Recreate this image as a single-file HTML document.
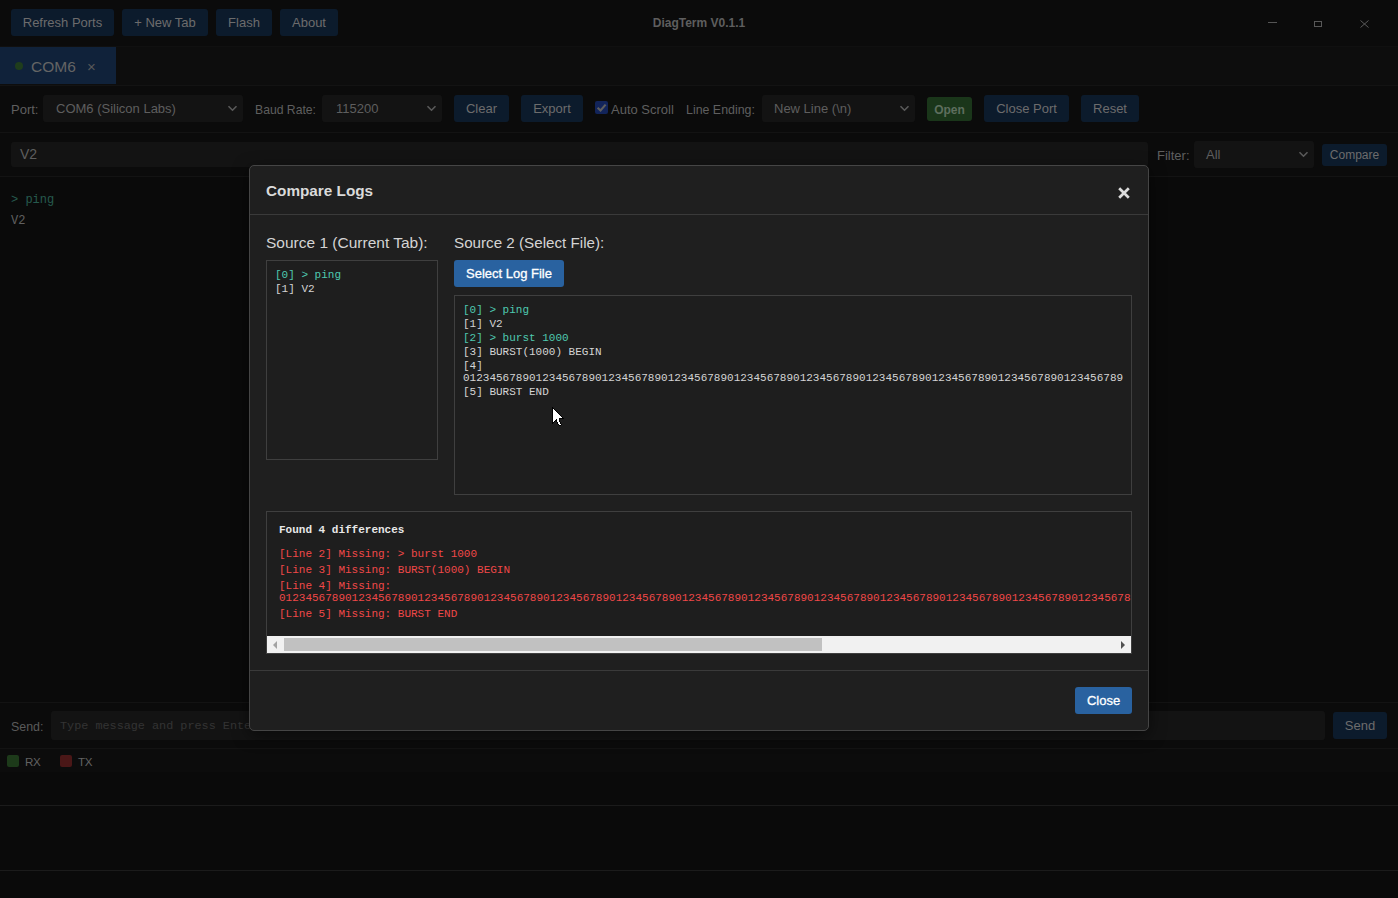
<!DOCTYPE html>
<html><head><meta charset="utf-8">
<style>
*{box-sizing:border-box;margin:0;padding:0}
html,body{width:1398px;height:898px;overflow:hidden;background:#0b0b0b;font-family:"Liberation Sans",sans-serif;}
.a{position:absolute}
.hl{position:absolute;left:0;width:1398px;height:1px;background:#131313}
.btn{position:absolute;background:#0c1b2c;color:#6c6c6c;border-radius:3px;font-size:13px;height:27px;line-height:27px;text-align:center;white-space:nowrap}
.lbl{position:absolute;color:#5f5f5f;font-size:13px;white-space:nowrap;line-height:16px}
.sel{position:absolute;background:#131313;border-radius:3px;height:27px;color:#5e5e5e;font-size:13px;line-height:27px;white-space:nowrap}
.chev{position:absolute;top:10px;width:10px;height:6px}
.mono{font-family:"Liberation Mono",monospace}
.logbox{border:1px solid #3f3f3f;background:#1e1e1e;padding:8px;font-size:11px;color:#d4d4d4;overflow:hidden}
.logbox div{white-space:pre-wrap;line-height:12px;margin-bottom:2px}
.g{color:#4ec9b0}
.diffbox{border:1px solid #3f3f3f;background:#1e1e1e;padding:12px;font-size:11px;overflow:hidden}
.diffbox div{white-space:pre-wrap}
.found{color:#e8e8e8;font-weight:bold;line-height:12px;margin-bottom:12px}
.r{color:#f04848;line-height:12px;margin-bottom:4px}
.sb{position:absolute;left:0;bottom:0;width:864px;height:17px;background:#f1f1f1}
.thumb{position:absolute;left:17px;top:2px;width:538px;height:13px;background:#c1c1c1}
.sbl{position:absolute;left:6px;top:4.5px;width:0;height:0;border-top:4px solid transparent;border-bottom:4px solid transparent;border-right:4px solid #a3a3a3}
.sbr{position:absolute;right:6px;top:4.5px;width:0;height:0;border-top:4px solid transparent;border-bottom:4px solid transparent;border-left:4px solid #505050}
</style></head><body>
<!-- title bar -->
<div class="a" style="left:0;top:0;width:1398px;height:46px;background:#0b0b0b"></div>
<div class="btn" style="left:11px;top:9px;width:103px">Refresh Ports</div>
<div class="btn" style="left:122px;top:9px;width:86px">+ New Tab</div>
<div class="btn" style="left:216px;top:9px;width:56px">Flash</div>
<div class="btn" style="left:280px;top:9px;width:58px">About</div>
<div class="a" style="left:0;top:15px;width:1398px;text-align:center;font-weight:bold;font-size:12px;color:#5e5e5e;line-height:16px">DiagTerm V0.1.1</div>
<div class="a" style="left:1268px;top:22px;width:9px;height:1px;background:#555"></div>
<div class="a" style="left:1314px;top:21px;width:8px;height:6px;border:1px solid #585858"></div>
<svg class="a" style="left:1360px;top:20px" width="9" height="8"><path d="M0.5 0.5L8.5 7.5M8.5 0.5L0.5 7.5" stroke="#5a5a5a" stroke-width="1"/></svg>
<div class="hl" style="top:46px;background:#101010"></div>

<!-- tab row -->
<div class="a" style="left:0;top:47px;width:1398px;height:38px;background:#0d0d0d"></div>
<div class="a" style="left:0;top:47px;width:116px;height:37px;background:#10223a"></div>
<div class="a" style="left:15px;top:62px;width:8px;height:8px;border-radius:50%;background:#1f3d1c"></div>
<div class="a" style="left:31px;top:58px;font-size:15.5px;color:#646464;line-height:17px">COM6</div>
<div class="a" style="left:87px;top:58px;font-size:15px;color:#585858;line-height:17px">×</div>
<div class="hl" style="top:85px"></div>

<!-- toolbar -->
<div class="a" style="left:0;top:86px;width:1398px;height:46px;background:#0b0b0b"></div>
<div class="lbl" style="left:11px;top:102px">Port:</div>
<div class="sel" style="left:43px;top:95px;width:200px;padding-left:13px">COM6 (Silicon Labs)</div>
<svg class="a" style="left:227px;top:105px" width="11" height="7"><path d="M1.5 1.2L5.5 5.2L9.5 1.2" stroke="#5a5a5a" stroke-width="1.6" fill="none"/></svg>
<div class="lbl" style="left:255px;top:102px;font-size:12.2px">Baud Rate:</div>
<div class="sel" style="left:322px;top:95px;width:120px;padding-left:14px">115200</div>
<svg class="a" style="left:426px;top:105px" width="11" height="7"><path d="M1.5 1.2L5.5 5.2L9.5 1.2" stroke="#5a5a5a" stroke-width="1.6" fill="none"/></svg>
<div class="btn" style="left:454px;top:95px;width:55px">Clear</div>
<div class="btn" style="left:521px;top:95px;width:62px">Export</div>
<div class="a" style="left:595px;top:101px;width:13px;height:13px;background:#12245a;border-radius:2px"></div><svg class="a" style="left:595px;top:101px" width="13" height="13"><path d="M2.6 6.8L5.5 9.5L10.6 3.6" stroke="#5e5e5e" stroke-width="2.1" fill="none"/></svg>
<div class="lbl" style="left:611px;top:102px">Auto Scroll</div>
<div class="lbl" style="left:686px;top:102px;font-size:12.4px">Line Ending:</div>
<div class="sel" style="left:762px;top:95px;width:153px;padding-left:12px">New Line (\n)</div>
<svg class="a" style="left:899px;top:105px" width="11" height="7"><path d="M1.5 1.2L5.5 5.2L9.5 1.2" stroke="#5a5a5a" stroke-width="1.6" fill="none"/></svg>
<div class="btn" style="left:927px;top:97px;width:45px;height:24px;line-height:26px;background:#1a361a;font-weight:bold;font-size:12px;color:#5e6e5e">Open</div>
<div class="btn" style="left:984px;top:95px;width:85px">Close Port</div>
<div class="btn" style="left:1081px;top:95px;width:58px">Reset</div>
<div class="hl" style="top:132px"></div>

<!-- filter row -->
<div class="sel" style="left:11px;top:142px;width:1137px;height:25px;line-height:25px;padding-left:9px;font-size:14px">V2</div>
<div class="lbl" style="left:1157px;top:148px">Filter:</div>
<div class="sel" style="left:1194px;top:141px;width:120px;padding-left:12px">All</div>
<svg class="a" style="left:1298px;top:151px" width="11" height="7"><path d="M1.5 1.2L5.5 5.2L9.5 1.2" stroke="#5a5a5a" stroke-width="1.6" fill="none"/></svg>
<div class="btn" style="left:1322px;top:144px;width:65px;height:22px;line-height:22px;font-size:12px">Compare</div>
<div class="hl" style="top:176px"></div>

<!-- terminal -->
<div class="a" style="left:0;top:177px;width:1398px;height:525px;background:#0a0a0a"></div>
<div class="a mono" style="left:11px;top:190px;font-size:12px;line-height:20px;color:#606060">
<div style="color:#265a4e">&gt; ping</div>
<div style="margin-top:1px">V2</div>
</div>

<!-- send row -->
<div class="hl" style="top:702px"></div>
<div class="lbl" style="left:11px;top:719px;font-size:12.4px;color:#5a5a5a">Send:</div>
<div class="sel" style="left:51px;top:711px;width:1274px;height:29px;line-height:31px;padding-left:9px;color:#333;font-family:'Liberation Mono',monospace;font-size:11.8px">Type message and press Enter...</div>
<div class="btn" style="left:1333px;top:712px;width:54px">Send</div>
<div class="hl" style="top:748px"></div>
<div class="a" style="left:0;top:749px;width:1398px;height:23px;background:#0c0c0c"></div>
<div class="a" style="left:0;top:772px;width:1398px;height:126px;background:#0a0a0a"></div>
<div class="a" style="left:7px;top:755px;width:12px;height:12px;border-radius:2px;background:#1d3a1a"></div>
<div class="a" style="left:25px;top:755px;font-size:11.6px;letter-spacing:-0.4px;color:#626262;line-height:14px">RX</div>
<div class="a" style="left:60px;top:755px;width:12px;height:12px;border-radius:2px;background:#4a1717"></div>
<div class="a" style="left:78px;top:755px;font-size:11.6px;letter-spacing:-0.4px;color:#626262;line-height:14px">TX</div>
<div class="hl" style="top:805px;background:#1b1b1b"></div>
<div class="hl" style="top:870px;background:#1b1b1b"></div>

<!-- MODAL -->
<div id="modal" class="a" style="left:249px;top:165px;width:900px;height:566px;background:#1f1f1f;border:1px solid #454545;border-radius:5px;box-shadow:0 4px 16px rgba(0,0,0,0.5)">
<div class="a" style="left:16px;top:16px;font-size:15.3px;font-weight:bold;color:#dadada;line-height:18px">Compare Logs</div>
<svg class="a" style="left:868px;top:21px" width="12" height="12"><path d="M1.2 1.2L10.8 10.8M10.8 1.2L1.2 10.8" stroke="#dcdcdc" stroke-width="2.7"/></svg>
<div class="a" style="left:0;top:48px;width:898px;height:1px;background:#3a3a3a"></div>
<div class="a" style="left:16px;top:68px;font-size:15.5px;color:#d4d4d4;line-height:18px">Source 1 (Current Tab):</div>
<div class="a" style="left:204px;top:68px;font-size:15.2px;color:#d4d4d4;line-height:18px">Source 2 (Select File):</div>
<div class="a mono logbox" style="left:16px;top:94px;width:172px;height:200px">
<div class="g">[0] &gt; ping</div><div>[1] V2</div>
</div>
<div class="a" style="left:204px;top:94px;width:110px;height:27px;background:#2962a0;border-radius:3px;color:#fff;font-size:13px;line-height:27px;text-align:center;-webkit-text-stroke:0.3px #fff">Select Log File</div>
<div class="a mono logbox" style="left:204px;top:129px;width:678px;height:200px">
<div class="g">[0] &gt; ping</div><div>[1] V2</div><div class="g">[2] &gt; burst 1000</div><div>[3] BURST(1000) BEGIN</div><div>[4] 0123456789012345678901234567890123456789012345678901234567890123456789012345678901234567890123456789</div><div>[5] BURST END</div>
</div>
<div class="a mono diffbox" style="left:16px;top:345px;width:866px;height:143px">
<div class="found">Found 4 differences</div>
<div class="r">[Line 2] Missing: &gt; burst 1000</div>
<div class="r">[Line 3] Missing: BURST(1000) BEGIN</div>
<div class="r">[Line 4] Missing: 01234567890123456789012345678901234567890123456789012345678901234567890123456789012345678901234567890123456789012345678901234567890123456789012345678901234567890123456789012345678901234567890123456789</div>
<div class="r">[Line 5] Missing: BURST END</div>
<div class="sb"><div class="sbl"></div><div class="thumb"></div><div class="sbr"></div></div>
</div>
<div class="a" style="left:0;top:504px;width:898px;height:1px;background:#3a3a3a"></div>
<div class="a" style="left:825px;top:521px;width:57px;height:27px;background:#2962a0;border-radius:3px;color:#fff;font-size:13px;line-height:27px;text-align:center;-webkit-text-stroke:0.3px #fff">Close</div>
</div>
<svg class="a" style="left:552px;top:407px" width="12" height="20" shape-rendering="crispEdges"><path d="M0 0h1v1h-1zM0 1h2v1h-2zM0 2h1v1h-1zM2 2h1v1h-1zM0 3h1v1h-1zM3 3h1v1h-1zM0 4h1v1h-1zM4 4h1v1h-1zM0 5h1v1h-1zM5 5h1v1h-1zM0 6h1v1h-1zM6 6h1v1h-1zM0 7h1v1h-1zM7 7h1v1h-1zM0 8h1v1h-1zM8 8h1v1h-1zM0 9h1v1h-1zM9 9h1v1h-1zM0 10h1v1h-1zM10 10h1v1h-1zM0 11h1v1h-1zM7 11h5v1h-5zM0 12h1v1h-1zM4 12h1v1h-1zM7 12h1v1h-1zM0 13h1v1h-1zM3 13h2v1h-2zM7 13h1v1h-1zM0 14h1v1h-1zM2 14h1v1h-1zM4 14h1v1h-1zM7 14h1v1h-1zM0 15h2v1h-2zM5 15h1v1h-1zM8 15h1v1h-1zM0 16h1v1h-1zM5 16h1v1h-1zM8 16h1v1h-1zM6 17h1v1h-1zM9 17h1v1h-1zM7 18h2v1h-2z" fill="#000"/><path d="M1 2h1v1h-1zM1 3h2v1h-2zM1 4h3v1h-3zM1 5h4v1h-4zM1 6h5v1h-5zM1 7h6v1h-6zM1 8h7v1h-7zM1 9h8v1h-8zM1 10h9v1h-9zM1 11h6v1h-6zM1 12h3v1h-3zM5 12h2v1h-2zM1 13h2v1h-2zM5 13h2v1h-2zM1 14h1v1h-1zM5 14h2v1h-2zM6 15h2v1h-2zM6 16h2v1h-2zM7 17h2v1h-2z" fill="#fff"/></svg>
</body></html>
